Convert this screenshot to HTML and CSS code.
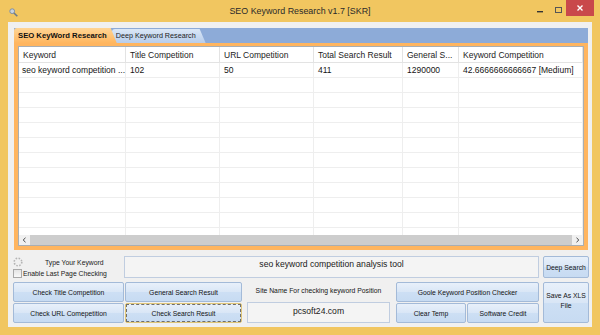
FILE: index.html
```html
<!DOCTYPE html>
<html lang="en">
<head>
  <meta charset="UTF-8" />
  <title>SEO Keyword Research v1.7 [SKR]</title>
  <link rel="stylesheet" href="styles.css">
</head>
<body>
  <div class="window">
    <div class="titlebar">
      <svg class="app-icon" width="9" height="9" viewBox="0 0 9 9">
        <circle cx="3.2" cy="3.2" r="2.4" fill="#c9d3de" stroke="#7f8fa3" stroke-width="1"/>
        <path d="M5 5 L8.3 8.3" stroke="#6b7a8c" stroke-width="1.6"/>
      </svg>
      <div class="title">SEO Keyword Research v1.7 [SKR]</div>
      <div class="controls">
        <svg class="ctl-min" width="20" height="16" viewBox="0 0 20 16"><rect x="4" y="11" width="6" height="1.4" fill="#333"/></svg>
        <svg class="ctl-max" width="13" height="16" viewBox="0 0 13 16"><rect x="2.5" y="7.5" width="6" height="5" fill="none" stroke="#555" stroke-width="1"/></svg>
        <div class="ctl-close">
          <svg width="8" height="8" viewBox="0 0 8 8"><path d="M1.5 1.5 L6.5 6.5 M6.5 1.5 L1.5 6.5" stroke="#fff" stroke-width="1.4"/></svg>
        </div>
      </div>
    </div>

    <div class="client">
      <div class="tabstrip">
        <div class="tab active">SEO KeyWord Research</div>
        <div class="tab">Deep Keyword Research</div>
      </div>

      <div class="tabpage">
        <div class="listview">
          <div class="lv-row lv-head">
            <div class="cell">Keyword</div>
            <div class="cell">Title Competition</div>
            <div class="cell">URL Competition</div>
            <div class="cell">Total Search Result</div>
            <div class="cell">General S...</div>
            <div class="cell">Keyword Competition</div>
          </div>
          <div class="lv-body">
            <div class="lv-row">
              <div class="cell first">seo keyword competition ...</div>
              <div class="cell">102</div>
              <div class="cell">50</div>
              <div class="cell">411</div>
              <div class="cell">1290000</div>
              <div class="cell">42.6666666666667 [Medium]</div>
            </div>
            <div class="lv-row"><div class="cell"></div><div class="cell"></div><div class="cell"></div><div class="cell"></div><div class="cell"></div><div class="cell"></div></div>
            <div class="lv-row"><div class="cell"></div><div class="cell"></div><div class="cell"></div><div class="cell"></div><div class="cell"></div><div class="cell"></div></div>
            <div class="lv-row"><div class="cell"></div><div class="cell"></div><div class="cell"></div><div class="cell"></div><div class="cell"></div><div class="cell"></div></div>
            <div class="lv-row"><div class="cell"></div><div class="cell"></div><div class="cell"></div><div class="cell"></div><div class="cell"></div><div class="cell"></div></div>
            <div class="lv-row"><div class="cell"></div><div class="cell"></div><div class="cell"></div><div class="cell"></div><div class="cell"></div><div class="cell"></div></div>
            <div class="lv-row"><div class="cell"></div><div class="cell"></div><div class="cell"></div><div class="cell"></div><div class="cell"></div><div class="cell"></div></div>
            <div class="lv-row"><div class="cell"></div><div class="cell"></div><div class="cell"></div><div class="cell"></div><div class="cell"></div><div class="cell"></div></div>
            <div class="lv-row"><div class="cell"></div><div class="cell"></div><div class="cell"></div><div class="cell"></div><div class="cell"></div><div class="cell"></div></div>
            <div class="lv-row"><div class="cell"></div><div class="cell"></div><div class="cell"></div><div class="cell"></div><div class="cell"></div><div class="cell"></div></div>
            <div class="lv-row"><div class="cell"></div><div class="cell"></div><div class="cell"></div><div class="cell"></div><div class="cell"></div><div class="cell"></div></div>
            <div class="lv-row"><div class="cell"></div><div class="cell"></div><div class="cell"></div><div class="cell"></div><div class="cell"></div><div class="cell"></div></div>
          </div>
          <div class="hscroll">
            <div class="arrow">
              <svg width="5" height="6" viewBox="0 0 5 6"><path d="M3.5 0.8 L1.2 3 L3.5 5.2" fill="none" stroke="#444" stroke-width="1"/></svg>
            </div>
            <div class="thumb"></div>
            <div class="arrow">
              <svg width="5" height="6" viewBox="0 0 5 6"><path d="M1.5 0.8 L3.8 3 L1.5 5.2" fill="none" stroke="#444" stroke-width="1"/></svg>
            </div>
          </div>
        </div>
      </div>

      <div class="row-input">
        <div class="kw-left">
          <div class="kw-line">
            <svg class="spinner" width="10" height="10" viewBox="0 0 10 10">
              <circle cx="5" cy="5" r="3.8" fill="none" stroke="#b4b4b4" stroke-width="1.6" stroke-dasharray="1.6 1.4"/>
            </svg>
            <span class="kw-label">Type Your Keyword</span>
          </div>
          <div class="kw-line">
            <span class="checkbox"></span>
            <span class="chk-label">Enable Last Page Checking</span>
          </div>
        </div>
        <div class="textbox kw-box">seo keyword competition analysis tool</div>
        <div class="btn deep">Deep Search</div>
      </div>

      <div class="row-buttons">
        <div class="btn-grid left-grid">
          <div class="btn">Check Title Competition</div>
          <div class="btn">General Search Result</div>
          <div class="btn">Check URL Comepetition</div>
          <div class="btn focused">Check Search Result</div>
        </div>
        <div class="site">
          <div class="site-label">Site Name For checking keyword Position</div>
          <div class="textbox site-box">pcsoft24.com</div>
        </div>
        <div class="btn-grid right-grid">
          <div class="btn wide">Goole Keyword Position Checker</div>
          <div class="btn">Clear Temp</div>
          <div class="btn">Software Credit</div>
        </div>
        <div class="btn save">Save As XLS<br>File</div>
      </div>
    </div>
  </div>
</body>
</html>
```

FILE: styles.css
```css
body {
  margin: 0;
  width: 600px;
  height: 335px;
  overflow: hidden;
  background: #f1c660;
  font-family: "Liberation Sans", Arial, sans-serif;
  color: #151515;
}
.window {
  display: flex;
  flex-direction: column;
  height: 335px;
}

/* title bar */
.titlebar {
  height: 22px;
  flex: none;
  display: grid;
  grid-template-columns: 1fr auto 1fr;
}
.app-icon {
  margin: 8px 0 0 9px;
}
.title {
  font-size: 8.9px;
  line-height: 23px;
  color: #2a2a2a;
}
.controls {
  justify-self: end;
  display: flex;
  align-items: flex-start;
  margin-right: 6px;
}
.ctl-close {
  width: 28px;
  height: 16px;
  background: #c9484b;
  display: flex;
  align-items: center;
  justify-content: center;
}

/* client area */
.client {
  flex: 1;
  margin: 0 8px 8px;
  background: #f0f0f0;
  padding: 5px 3px 4px 5px;
  display: flex;
  flex-direction: column;
}
.tabstrip {
  height: 16px;
  flex: none;
  margin: 0 1px 0 1px;
  display: flex;
  align-items: flex-end;
  background: linear-gradient(#f0f0f0 1px, #8dabd8 1px);
}
.tab {
  height: 14px;
  line-height: 14px;
  font-size: 7.2px;
  color: #1b1b1b;
  padding: 0 10px 0 4px;
  margin-right: -5px;
  border-radius: 3px 0 0 0;
  background: linear-gradient(#dbe7f6, #b7cdeb);
  clip-path: polygon(0 0, calc(100% - 6px) 0, 100% 100%, 0 100%);
}
.tab.active {
  position: relative;
  z-index: 1;
  height: 15px;
  line-height: 15px;
  font-size: 7.7px;
  font-weight: bold;
  color: #111;
  background: linear-gradient(#ffd594, #ffb65f);
}

.tabpage {
  flex: none;
  height: 207px;
  box-sizing: border-box;
  margin: 0 1px 0 1px;
  border: 4px solid #ffb55f;
  border-top-width: 3px;
  display: flex;
}
.listview {
  flex: 1;
  border: 1px solid #a9aeb3;
  background: #fff;
  display: flex;
  flex-direction: column;
  overflow: hidden;
}
.lv-row {
  display: grid;
  grid-template-columns: 107px 94px 94px 89px 56px 1fr;
  height: 15px;
  flex: none;
  font-size: 8.5px;
  line-height: 14px;
}
.lv-row .cell {
  padding-left: 4px;
  border-right: 1px solid #eeeeee;
  border-bottom: 1px solid #eeeeee;
  white-space: nowrap;
  overflow: hidden;
}
.lv-row .cell.first {
  padding-left: 3px;
}
.lv-head {
  height: 16px;
  line-height: 16px;
  color: #222;
}
.lv-head .cell {
  border-right-color: #e3e3e3;
  border-bottom-color: #e3e3e3;
}
.lv-body {
  flex: 1;
  overflow: hidden;
}
.hscroll {
  flex: none;
  height: 10px;
  display: flex;
  background: #f0f0f0;
}
.hscroll .arrow {
  width: 11px;
  display: flex;
  align-items: center;
  justify-content: center;
}
.hscroll .thumb {
  flex: 1;
  background: #cdcdcd;
}

/* keyword row */
.row-input {
  flex: none;
  height: 22px;
  margin-top: 6px;
  display: flex;
  gap: 4px;
}
.kw-left {
  width: 107px;
  display: flex;
  flex-direction: column;
}
.kw-line {
  height: 11px;
  display: flex;
  align-items: center;
  font-size: 6.8px;
  color: #1a1a1a;
}
.kw-label {
  margin-left: 22px;
  margin-top: 2px;
}
.checkbox {
  width: 7px;
  height: 7px;
  border: 1px solid #a8a8a8;
  background: linear-gradient(#e4e4e4, #f8f8f8);
  margin-top: 2px;
}
.chk-label {
  margin-left: 1px;
  margin-top: 1px;
}
.textbox {
  border: 1px solid #c0cde0;
  background: #f4f4f4;
  font-size: 8.6px;
  text-align: center;
  color: #1a1a1a;
}
.kw-box {
  flex: 1;
  padding-top: 2px;
}

/* buttons */
.btn {
  box-sizing: border-box;
  border: 1px solid #a3bad8;
  border-radius: 2px;
  background: linear-gradient(#e8f0fa, #d9e6f6 50%, #cddff4 51%, #c7dbf2);
  font-size: 6.8px;
  color: #141414;
  display: flex;
  align-items: center;
  justify-content: center;
  text-align: center;
}
.btn.deep {
  width: 46px;
}
.btn.focused {
  border-color: #e0c679;
  outline: 1px dashed #6e6e6e;
  outline-offset: -2px;
}
.row-buttons {
  flex: none;
  height: 41px;
  margin-top: 4px;
  display: flex;
}
.btn-grid {
  display: grid;
  grid-template-rows: 20px 20px;
  gap: 1px;
}
.left-grid {
  width: 229px;
  grid-template-columns: 111px 117px;
}
.site {
  width: 143px;
  margin-left: 5px;
  display: flex;
  flex-direction: column;
}
.site-label {
  height: 20px;
  line-height: 17px;
  font-size: 6.8px;
  text-align: center;
  white-space: nowrap;
}
.site-box {
  height: 21px;
  box-sizing: border-box;
  line-height: 17px;
}
.right-grid {
  width: 143px;
  margin-left: 6px;
  grid-template-columns: 70px 72px;
}
.btn.wide {
  grid-column: 1 / 3;
}
.btn.save {
  width: 46px;
  margin-left: 4px;
  line-height: 10px;
  padding-bottom: 4px;
}
```
